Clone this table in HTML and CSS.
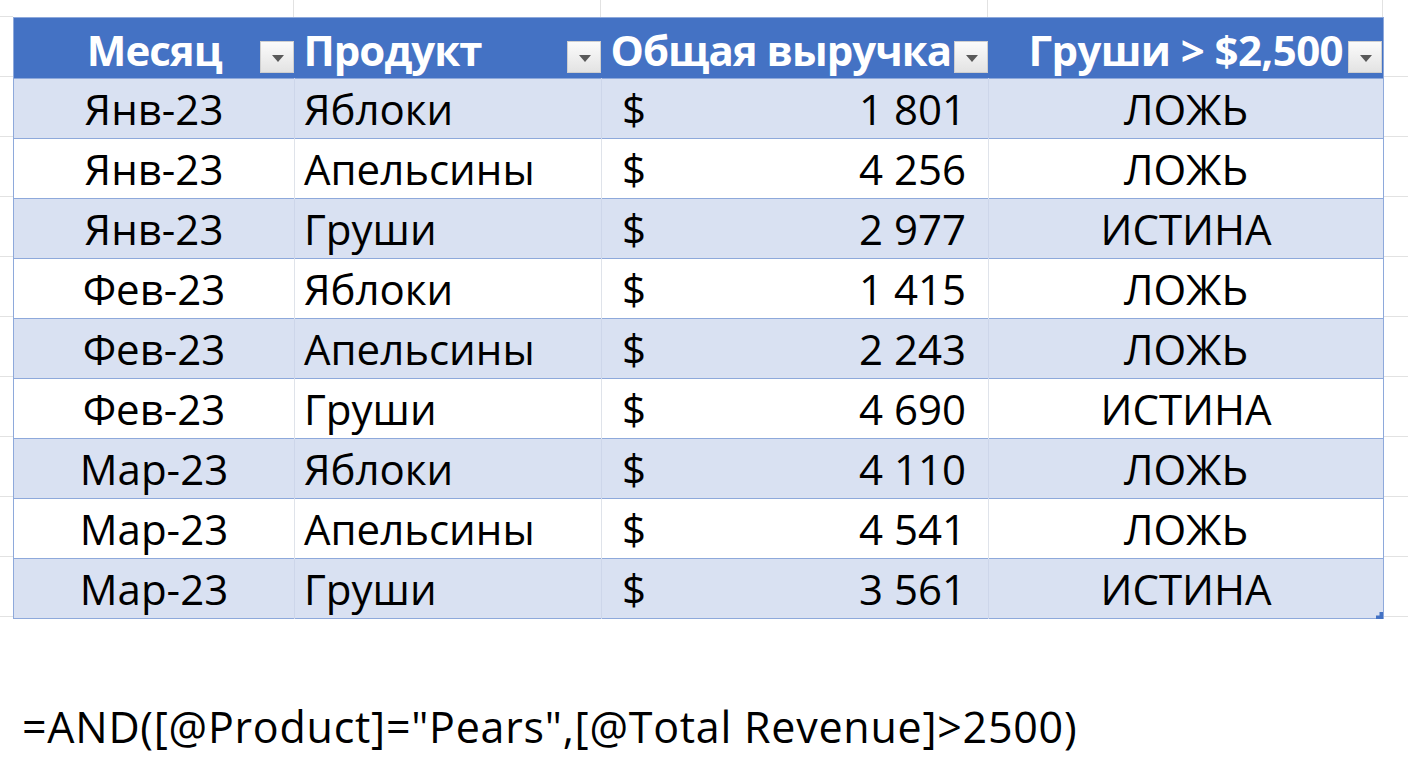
FILE: index.html
```html
<!DOCTYPE html>
<html lang="ru">
<head>
<meta charset="utf-8">
<link rel="stylesheet" href="styles.css">
</head>
<body>
<div class="sheet">
  <div class="top-strip">
    <div class="gut"></div>
    <div class="tc c1"></div>
    <div class="tc c2"></div>
    <div class="tc c3"></div>
    <div class="tc c4"></div>
    <div class="gut-r"></div>
  </div>
  <div class="body-row">
    <div class="gutter"></div>
    <div class="table-wrap">
      <table class="tbl">
        <colgroup><col class="w1"><col class="w2"><col class="w3"><col class="w4"></colgroup>
        <thead>
          <tr>
            <th class="center">Месяц<span class="dd"></span></th>
            <th class="left">Продукт<span class="dd"></span></th>
            <th class="left h3">Общая выручка<span class="dd"></span></th>
            <th class="center h4">Груши &gt; $2,500<span class="dd"></span></th>
          </tr>
        </thead>
        <tbody>
          <tr><td class="center">Янв-23</td><td class="left">Яблоки</td><td class="money"><span>$</span><span>1 801</span></td><td class="center">ЛОЖЬ</td></tr>
          <tr><td class="center">Янв-23</td><td class="left">Апельсины</td><td class="money"><span>$</span><span>4 256</span></td><td class="center">ЛОЖЬ</td></tr>
          <tr><td class="center">Янв-23</td><td class="left">Груши</td><td class="money"><span>$</span><span>2 977</span></td><td class="center">ИСТИНА</td></tr>
          <tr><td class="center">Фев-23</td><td class="left">Яблоки</td><td class="money"><span>$</span><span>1 415</span></td><td class="center">ЛОЖЬ</td></tr>
          <tr><td class="center">Фев-23</td><td class="left">Апельсины</td><td class="money"><span>$</span><span>2 243</span></td><td class="center">ЛОЖЬ</td></tr>
          <tr><td class="center">Фев-23</td><td class="left">Груши</td><td class="money"><span>$</span><span>4 690</span></td><td class="center">ИСТИНА</td></tr>
          <tr><td class="center">Мар-23</td><td class="left">Яблоки</td><td class="money"><span>$</span><span>4 110</span></td><td class="center">ЛОЖЬ</td></tr>
          <tr><td class="center">Мар-23</td><td class="left">Апельсины</td><td class="money"><span>$</span><span>4 541</span></td><td class="center">ЛОЖЬ</td></tr>
          <tr><td class="center">Мар-23</td><td class="left">Груши</td><td class="money"><span>$</span><span>3 561</span></td><td class="center">ИСТИНА</td></tr>
        </tbody>
      </table>
      <span class="resize"></span>
    </div>
    <div class="gutter gutter-r"></div>
  </div>
  <div class="formula">=AND([@Product]="Pears",[@Total Revenue]&gt;2500)</div>
</div>
</body>
</html>
```

FILE: styles.css
```css
* { box-sizing: border-box; }
html, body { margin: 0; padding: 0; background: #ffffff; }
body {
  width: 1408px;
  height: 768px;
  overflow: hidden;
  font-family: "Open Sans", "Noto Sans", sans-serif;
  color: #000;
}
.sheet { display: flex; flex-direction: column; }
.top-strip { display: flex; height: 17px; }
.top-strip .gut { width: 13px; border-bottom: 1px solid #e2e2e2; }
.top-strip .tc { border-right: 1px solid #e2e2e2; }
.top-strip .c1 { width: 281px; }
.top-strip .c2 { width: 307px; }
.top-strip .c3 { width: 387px; }
.top-strip .c4 { width: 395px; }
.top-strip .gut-r { flex: 1; }
.body-row { display: flex; }
.gutter {
  width: 13px;
  background-image: repeating-linear-gradient(to bottom, transparent 0, transparent 59px, #e2e2e2 59px, #e2e2e2 60px);
}
.gutter-r { flex: 1; width: auto; }
.table-wrap { position: relative; width: 1370px; }
.tbl {
  border-collapse: collapse;
  table-layout: fixed;
  width: 1370px;
  border: 1px solid #8ea9db;
}
.w1 { width: 281px; }
.w2 { width: 307px; }
.w3 { width: 387px; }
.w4 { width: 395px; }
.tbl th, .tbl td {
  padding: 0;
  font-size: 42px;
  white-space: nowrap;
  overflow: visible;
}
.tbl td {
  height: 60px;
  line-height: 58px;
  padding-top: 1px;
  vertical-align: top;
  border-top: 1px solid #8ea9db;
  border-right: 1px solid #dfe3ea;
}
.tbl thead th {
  height: 60px;
  line-height: 56px;
  padding-top: 4px;
  background: #4472c4;
  color: #ffffff;
  font-weight: 700;
  position: relative;
  letter-spacing: -1px;
  vertical-align: top;
}
.tbl thead th.h4 { letter-spacing: -0.6px; }
.tbl td:last-child { border-right: none; }
.tbl tbody tr:nth-child(odd) td { background: #d9e1f2; border-right-color: #cdd6ea; }
.tbl tbody tr:nth-child(odd) td:last-child { border-right: none; }
.center { text-align: center; }
.tbl .left { text-align: left; padding-left: 9px; }
.tbl .money { padding-left: 20px; padding-right: 22px; }
.money span:first-child { float: left; }
.money span:last-child { float: right; }
.dd {
  position: absolute;
  right: 1px;
  top: 23px;
  width: 34px;
  height: 32px;
  background: linear-gradient(to bottom, #fbfbfb, #e3e3e3);
  border: 1px solid #cfcfcf;
}
.dd::after {
  content: "";
  position: absolute;
  left: 11px;
  top: 13px;
  border-left: 6px solid transparent;
  border-right: 6px solid transparent;
  border-top: 7px solid #595959;
}
.resize {
  position: absolute;
  right: 0;
  bottom: 0;
  width: 7px;
  height: 7px;
  background: #4472c4;
  clip-path: polygon(100% 0, 100% 100%, 0 100%, 0 50%, 50% 50%, 50% 0);
}
.formula {
  margin-top: 78px;
  padding-left: 22px;
  font-size: 43px;
  letter-spacing: 0.75px;
  line-height: 60px;
  white-space: nowrap;
}
```
